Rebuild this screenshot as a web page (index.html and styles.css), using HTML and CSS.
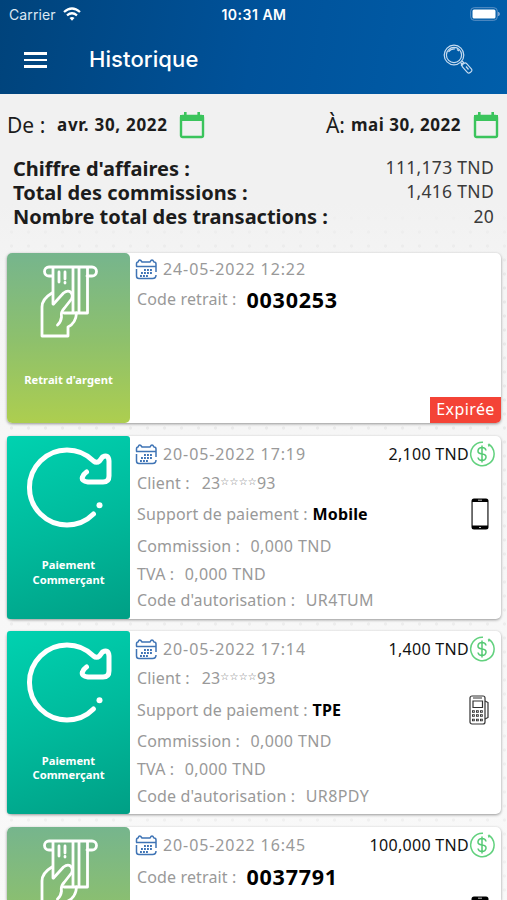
FILE: index.html
```
<!DOCTYPE html>
<html lang="fr">
<head>
    <meta charset="UTF-8">
    <title>Historique</title>
    <link rel="stylesheet" href="styles.css">
</head>
<body>
    <!-- icons -->
    <svg class="defs" width="0" height="0">
        <symbol id="calendar" viewBox="0 0 26 28">
            <rect x="2" y="5" width="22" height="21" rx="1.5" fill="none" stroke="#3bc45c" stroke-width="2.4"/>
            <path d="M1 4h24v6H1zM5 1h2.6v4H5zM18.4 1H21v4h-2.600z" fill="#3bc45c"/>
        </symbol>
        <symbol id="agenda" viewBox="0 0 22 22">
            <path d="M1.500 8.500V6Q1.500 4 3 4q1.500-4 4 0h8q2-4 4 0 2 0 2 2v8M1 8.500h20M1.500 11v7q0 2.500 2.500 2.500h13.500q3.500 0 3.500-3.500" fill="none" stroke="#3f74b5" stroke-width="1.500"/>
            <path d="M9 12h9M6 15h12M5 18h9" fill="none" stroke="#3f74b5" stroke-width="1.900" stroke-dasharray="1.900 1.100"/>
        </symbol>
        <symbol id="cash" viewBox="0 0 58 76">
            <g fill="none" stroke="#fff" stroke-width="2.800" stroke-linejoin="round" stroke-linecap="round">
                <path d="M13 13H9a4.500 4.500 0 0 1 0-9h43a4.500 4.500 0 0 1 0 9h-5M13 4v37M33 4v46M39 4v46M47.500 4v46H24"/>
                <path d="M19 9v10M25 9v7M25 19.500v.5"/>
                <path d="M12 30Q2 36 2 44v29H28V64q8-4 8.500-14M13.500 41l10-11q4-3 7-1 3 3 1 7l-7 9q-4 4-3 9-.5 5-4 8"/>
            </g>
        </symbol>
        <symbol id="refund" viewBox="0 0 86 84">
            <path d="M67.500 68A37.500 37.500 0 1 1 67.500 15q3 2.500 6 0l3-4q6-3 6.500 4v15q0 6-6 6H62q-7-1-5.500-5 1-3 4-5" fill="none" stroke="#fff" stroke-width="5" stroke-linecap="round" stroke-linejoin="round"/>
            <circle cx="73.500" cy="59.300" r="3" fill="#fff"/>
        </symbol>
        <symbol id="dollar" viewBox="0 0 26 26">
            <path d="M19.500 3A11.700 11.700 0 1 1 14 1.300M19.500 3l.5 2.500" fill="none" stroke="#62d17e" stroke-width="1.500"/>
            <path d="M17 9.500q-.5-3-4-3t-4 3 4 3.500 4 3.500-4 3-4-3M13 4.500v17" fill="none" stroke="#55c974" stroke-width="1.500"/>
        </symbol>
        <symbol id="phone" viewBox="0 0 18 32">
            <rect x=".5" y=".5" width="17" height="31" rx="2.500" fill="#000"/>
            <path d="M1.600 4h14.800v23.500H1.600z" fill="#fff"/>
            <path d="M7 2.200h4M8 29.500h2" stroke="#bbb" stroke-width="1"/>
        </symbol>
        <symbol id="tpe" viewBox="0 0 20 30">
            <g fill="none" stroke="#333" stroke-width="1.200">
                <rect x="1" y="1" width="15" height="28" rx="2"/>
                <path d="M4 3h9M4 6h9.500v6.500H4zM16 6l3 1.500v15L16 24"/>
            </g>
            <path d="M3 16.500h11M3 20.500h11M3 25h11" stroke="#333" stroke-width="2.600" stroke-dasharray="2.800 1.200"/>
            <path d="M4 16.500h11M4 20.500h11M4 25h11" stroke="#ccc" stroke-width=".9" stroke-dasharray=".9 3.100"/>
        </symbol>
    </svg>

    <header class="top">
        <div class="status">
            <div class="carrier">
                <span>Carrier</span>
                <svg width="18" height="14" viewBox="0 0 18 14">
                    <path d="M1 5q8-7 16 0M4 8.300q5-4 10 0" fill="none" stroke="#fff" stroke-width="2.300"/>
                    <path d="M6.500 11q2.500-2 5 0L9 13.800z" fill="#fff"/>
                </svg>
            </div>
            <div class="time">10:31 AM</div>
            <svg class="battery" width="31" height="14" viewBox="0 0 31 14">
                <rect x=".7" y=".7" width="26.600" height="12.600" rx="3.500" fill="none" stroke="#5c92c6"/>
                <rect x="2.500" y="2.500" width="23" height="9" rx="1.500" fill="#fff"/>
                <path d="M28.500 5q2 2 0 4z" fill="#7ba3cf" stroke="#7ba3cf"/>
            </svg>
        </div>
        <div class="bar">
            <div class="burger"><i></i><i></i><i></i></div>
            <h1>Historique</h1>
            <svg class="search" width="30" height="30" viewBox="0 0 30 30">
                <g fill="none" stroke="#c7dcf1" stroke-width="1.200">
                    <circle cx="11" cy="11" r="9.800"/>
                    <circle cx="11" cy="11" r="7.600"/>
                    <path d="M5.500 8Q8 4.500 12 5M14 5.500l2 1.500M17.500 18.500l2 2M19 17l2 2"/>
                    <rect x="-2.700" y="-5.500" width="5.400" height="11" rx="2" transform="translate(24 24) rotate(-42)"/>
                    <path d="M20 19.500q-2 0-1.500 2.500M23 22.500l2.500 3"/>
                </g>
            </svg>
        </div>
    </header>

    <main>
        <div class="dates">
            <span class="de">De :</span>
            <b class="d1">avr. 30, 2022</b>
            <svg width="26" height="28"><use href="#calendar"/></svg>
            <span class="a">À:</span>
            <b class="d2">mai 30, 2022</b>
            <svg width="26" height="28"><use href="#calendar"/></svg>
        </div>

        <div class="total">
            <div><b>Chiffre d'affaires :</b><span>111,173 TND</span></div>
            <div><b>Total des commissions :</b><span>1,416 TND</span></div>
            <div><b>Nombre total des transactions :</b><span>20</span></div>
        </div>

        <div class="card expired">
            <div class="type retrait">
                <svg width="58" height="76"><use href="#cash"/></svg>
                <p>Retrait d'argent</p>
            </div>
            <div class="info">
                <div class="row date"><svg width="22" height="22"><use href="#agenda"/></svg><span>24-05-2022 12:22</span></div>
                <div class="row code"><span>Code retrait :</span><b>0030253</b></div>
            </div>
            <span class="badge">Expirée</span>
        </div>

        <div class="card">
            <div class="type paiement">
                <svg width="86" height="84"><use href="#refund"/></svg>
                <p>Paiement<br>Commerçant</p>
            </div>
            <div class="info">
                <div class="row date">
                    <svg width="22" height="22"><use href="#agenda"/></svg><span>20-05-2022 17:19</span>
                    <div class="amount">2,100 TND<svg width="26" height="26"><use href="#dollar"/></svg></div>
                </div>
                <div class="row client"><span>Client :</span><span class="num">23<small>☆☆☆☆</small>93</span></div>
                <div class="row support"><span>Support de paiement :</span><b>Mobile</b><svg width="18" height="32"><use href="#phone"/></svg></div>
                <div class="row commission"><span>Commission :</span><span class="val">0,000 TND</span></div>
                <div class="row tva"><span>TVA :</span><span class="val">0,000 TND</span></div>
                <div class="row"><span>Code d'autorisation :</span><span class="val">UR4TUM</span></div>
            </div>
        </div>

        <div class="card">
            <div class="type paiement">
                <svg width="86" height="84"><use href="#refund"/></svg>
                <p>Paiement<br>Commerçant</p>
            </div>
            <div class="info">
                <div class="row date">
                    <svg width="22" height="22"><use href="#agenda"/></svg><span>20-05-2022 17:14</span>
                    <div class="amount">1,400 TND<svg width="26" height="26"><use href="#dollar"/></svg></div>
                </div>
                <div class="row client"><span>Client :</span><span class="num">23<small>☆☆☆☆</small>93</span></div>
                <div class="row support"><span>Support de paiement :</span><b>TPE</b><svg width="20" height="30"><use href="#tpe"/></svg></div>
                <div class="row commission"><span>Commission :</span><span class="val">0,000 TND</span></div>
                <div class="row tva"><span>TVA :</span><span class="val">0,000 TND</span></div>
                <div class="row"><span>Code d'autorisation :</span><span class="val">UR8PDY</span></div>
            </div>
        </div>

        <!-- last card runs under the bottom of the screen -->
        <div class="card cut">
            <div class="type retrait">
                <svg width="58" height="76"><use href="#cash"/></svg>
            </div>
            <div class="info">
                <div class="row date">
                    <svg width="22" height="22"><use href="#agenda"/></svg><span>20-05-2022 16:45</span>
                    <div class="amount">100,000 TND<svg width="26" height="26"><use href="#dollar"/></svg></div>
                </div>
                <div class="row code"><span>Code retrait :</span><b>0037791</b></div>
                <div class="row device"><svg width="18" height="32"><use href="#phone"/></svg></div>
            </div>
        </div>
    </main>
</body>
</html>
```
FILE: styles.css
```
*{
    box-sizing: border-box;
    margin: 0;
    padding: 0;
}
body{
    height: 900px;
    overflow: hidden;
    font-family: "Noto Sans", sans-serif;
    font-size: 16px;
    color: #1c1c1c;
    background: #f3f3f3;
}
svg{
    display: block;
    flex: none;
}
.defs{
    position: absolute;
}

/* header */
.top{
    height: 94px;
    color: #fff;
    font-family: Inter, sans-serif;
    background: linear-gradient(100deg, #00437b, #00529a 50%, #005eaa);
}
.status{
    height: 28px;
    padding: 0 6px 0 9px;
    display: grid;
    grid-template-columns: 1fr auto 1fr;
    align-items: center;
    font-size: 14px;
}
.carrier{
    display: flex;
    align-items: center;
    gap: 7px;
    letter-spacing: .1px;
    color: #dce8f3;
}
.time{
    margin-left: -2px;
    font-weight: 600;
    font-size: 14px;
    letter-spacing: .5px;
}
.battery{
    justify-self: end;
}
.bar{
    height: 66px;
    padding: 0 34px 0 24px;
    display: flex;
    align-items: center;
}
.burger{
    width: 23px;
    margin-top: -2px;
    display: grid;
    gap: 4px;
}
.burger i{
    height: 2.5px;
    background: #fff;
}
h1{
    margin: -4px 0 0 42px;
    font-size: 22px;
    font-weight: 500;
    letter-spacing: .1px;
}
.search{
    margin: -4px 0 0 auto;
}

/* filter + totals */
main{
    height: 806px;
    padding: 0 6px 0 7px;
    overflow: hidden;
    /* faded dots */
    background:
        linear-gradient(#f1f1f1 110px, rgba(244,244,244,.5) 190px, rgba(250,250,250,.7)),
        radial-gradient(circle, #dcdcdc 1.2px, #f6f6f6 2px) 3px 5px/17px 14px;
}
.dates{
    height: 61px;
    padding-right: 2px;
    display: flex;
    align-items: center;
    white-space: nowrap;
}
.de{
    width: 50px;
    font-size: 21px;
}
.d1, .d2{
    width: 122px;
    font-size: 17px;
    letter-spacing: .7px;
}
.d2{
    letter-spacing: .5px;
}
.a{
    margin-left: auto;
    margin-right: 6px;
    font-size: 21px;
}
.total{
    height: 98px;
    padding: 1px 7px 0 6px;
}
.total div{
    height: 24.3px;
    display: flex;
    justify-content: space-between;
    align-items: center;
    font-size: 20px;
    white-space: nowrap;
}
.total span{
    font-size: 17.5px;
    letter-spacing: .3px;
    color: #3a3a3a;
    padding-bottom: 2px;
}

/* cards */
.card{
    position: relative;
    height: 183px;
    margin-bottom: 12.5px;
    display: flex;
    background: #fff;
    border-radius: 5px;
    box-shadow: 0 1px 3px rgba(0,0,0,.4);
}
.expired{
    height: 170px;
}
.type{
    width: 123px;
    display: flex;
    flex-direction: column;
    align-items: center;
    border-radius: 5px;
    color: #fff;
    font-size: 11.2px;
    font-weight: bold;
    line-height: 14.5px;
    text-align: center;
}
.retrait{
    padding-top: 10px;
    background: linear-gradient(#76b58d, #8dc06d 85px, #adce4f 170px);
}
.retrait p{
    margin-top: 34px;
}
.paiement{
    padding-top: 10px;
    border-radius: 3px;
    background: linear-gradient(160deg, #00d2b0, #00ba9c 50%, #009f85);
}
.paiement p{
    margin-top: 28.5px;
}
.info{
    flex: 1;
    padding: 4px 6px 0 7px;
    color: #999;
    letter-spacing: .14px;
}
.row{
    height: 27px;
    display: flex;
    align-items: center;
    gap: 10.5px;
    white-space: nowrap;
}
.row b{
    color: #000;
}
.date{
    height: 28px;
    gap: 6px;
}
.date svg{
    margin-left: -2px;
}
.date span{
    letter-spacing: .9px;
}
.amount{
    margin-left: auto;
    display: flex;
    align-items: center;
    color: #111;
    letter-spacing: .3px;
}
.amount svg{
    margin-left: 0;
}
.client{
    height: 30px;
    gap: 12px;
}
.num{
    letter-spacing: .2px;
}
.num small{
    position: relative;
    top: -4px;
    font-family: "DejaVu Sans", sans-serif;
    font-size: 10px;
    color: #777;
}
.support{
    height: 33px;
    gap: 5px;
}
.support svg{
    margin-left: auto;
    margin-right: 6px;
}
.commission{
    height: 30px;
}
.tva{
    height: 26px;
}
.val{
    letter-spacing: .4px;
}
.expired .info{
    padding-top: 2px;
}
.code{
    height: 32px;
    gap: 10px;
}
.code b{
    font-size: 21.5px;
    letter-spacing: .75px;
}
.cut{
    height: 73px;
    margin-bottom: 0;
    border-radius: 5px 5px 0 0;
    overflow: hidden;
}
.cut .type{
    border-radius: 5px 5px 0 0;
}
.cut .code{
    height: 36px;
}
.device svg{
    margin: 7px 6px 0 auto;
}
.badge{
    position: absolute;
    right: 0;
    bottom: 0;
    width: 71px;
    height: 26px;
    border-radius: 0 0 5px 0;
    background: #f44336;
    color: #fff;
    font-size: 16px;
    letter-spacing: .4px;
    line-height: 25px;
    text-align: center;
}
```
